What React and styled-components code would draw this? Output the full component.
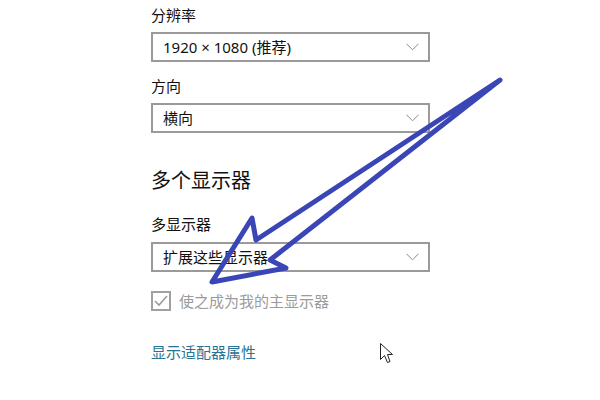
import React from "react";
import styled, { createGlobalStyle } from "styled-components";

const GlobalStyle = createGlobalStyle`
  html, body {
    margin: 0;
    padding: 0;
    background: #fff;
  }
  body {
    font-family: "Noto Sans", "Noto Sans CJK SC", sans-serif;
  }
`;

const Page = styled.div`
  position: relative;
  width: 600px;
  height: 400px;
  overflow: hidden;
  background: #fff;
`;

const Panel = styled.div`
  display: flex;
  flex-direction: column;
  align-items: flex-start;
  padding: 5px 0 0 151px;
`;

const Label = styled.div`
  font-size: 15px;
  line-height: 20px;
  color: #111;
  margin-top: ${(p) => p.$gap || 0}px;
`;

const Heading = styled.div`
  font-size: 20px;
  line-height: 28px;
  color: #111;
  margin-top: 34px;
`;

const Select = styled.div`
  box-sizing: border-box;
  width: 279px;
  height: 30px;
  margin-top: ${(p) => p.$gap || 7}px;
  border: 2px solid #9a9a9a;
  display: flex;
  align-items: center;
  justify-content: space-between;
  padding: 0 9px 0 10px;
  font-size: 15px;
  line-height: 20px;
  color: #111;
`;

const Chevron = () => (
  <svg width="13" height="8" viewBox="0 0 13 8">
    <path d="M0.5 0.8 L6.5 6.8 L12.5 0.8" fill="none" stroke="#8a8a8a" strokeWidth="1" />
  </svg>
);

const CheckRow = styled.div`
  display: flex;
  align-items: center;
  gap: 8px;
  margin-top: 19px;
  font-size: 15px;
  line-height: 20px;
  color: #9b9b9b;
`;

const Box = styled.div`
  box-sizing: border-box;
  width: 20px;
  height: 20px;
  border: 2px solid #a0a0a0;
  display: flex;
  align-items: center;
  justify-content: center;
`;

const Link = styled.a`
  margin-top: 31px;
  font-size: 15px;
  line-height: 20px;
  color: #2a7296;
  text-decoration: none;
`;

const Overlay = styled.svg`
  position: absolute;
  left: 0;
  top: 0;
  pointer-events: none;
`;

export default function App() {
  return (
    <Page>
      <GlobalStyle />
      <Panel>
        <Label>分辨率</Label>
        <Select>
          <span>1920 × 1080 (推荐)</span>
          <Chevron />
        </Select>
        <Label $gap={14}>方向</Label>
        <Select>
          <span>横向</span>
          <Chevron />
        </Select>
        <Heading>多个显示器</Heading>
        <Label $gap={19}>多显示器</Label>
        <Select $gap={8}>
          <span>扩展这些显示器</span>
          <Chevron />
        </Select>
        <CheckRow>
          <Box>
            <svg width="14" height="12" viewBox="0 0 14 12">
              <path d="M1 6 L5 10 L13 1" fill="none" stroke="#9a9a9a" strokeWidth="1.6" />
            </svg>
          </Box>
          <span>使之成为我的主显示器</span>
        </CheckRow>
        <Link href="#">显示适配器属性</Link>
      </Panel>
      <Overlay width="600" height="400" viewBox="0 0 600 400">
        <path
          d="M500 80 L256 240 L252 218 L212 282 L286 268 L270 260 Z"
          fill="none"
          stroke="#3a45b6"
          strokeWidth="5"
          strokeLinejoin="round"
          strokeLinecap="round"
        />
        <path
          d="M380.5 343.5 L380.5 359.5 L384.5 355.5 L387.5 362.5 L390 361.5 L387.5 354.5 L392.5 354.5 Z"
          fill="#fff"
          stroke="#222"
          strokeWidth="1"
          strokeLinejoin="round"
        />
      </Overlay>
    </Page>
  );
}
